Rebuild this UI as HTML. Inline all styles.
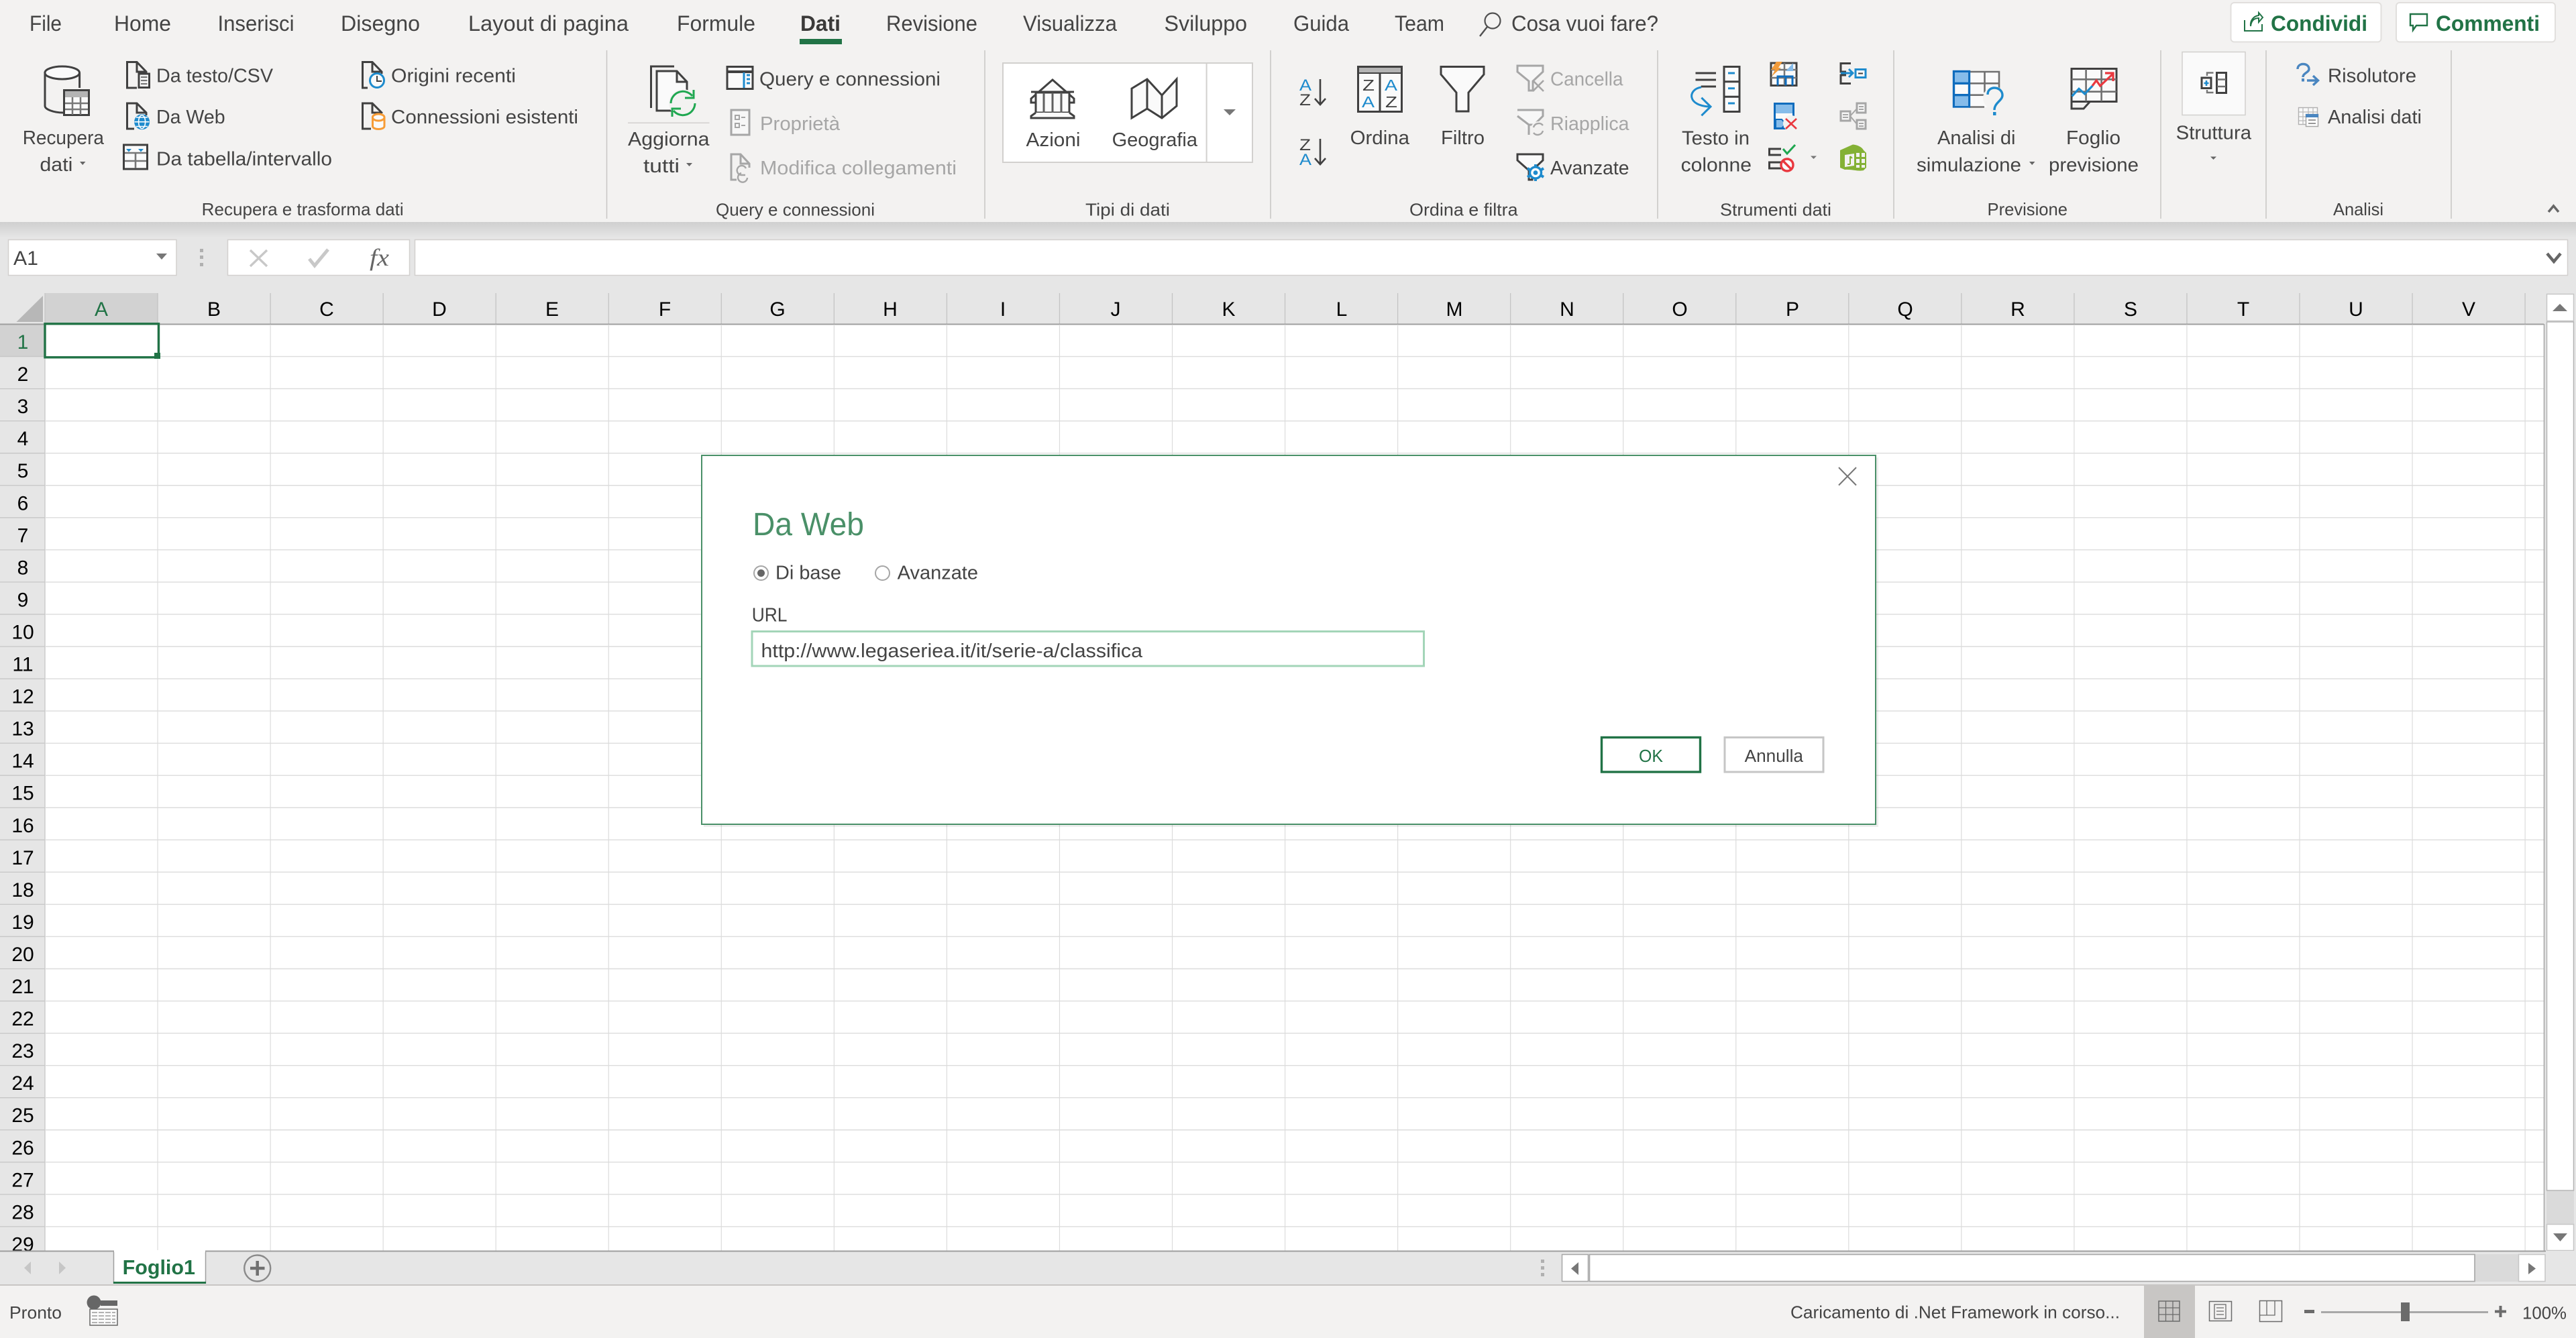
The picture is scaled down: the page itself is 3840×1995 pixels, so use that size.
<!DOCTYPE html>
<html lang="it"><head><meta charset="utf-8"><title>Excel - Da Web</title>
<style>
html,body{margin:0;padding:0;background:#fff;width:3840px;height:1995px;overflow:hidden}
svg{display:block}
text{font-family:"Liberation Sans",sans-serif;fill:#444}
.tab{font-size:32px}
.it{font-size:29px}
.gl{font-size:26px}
.dis{fill:#a6a6a6}
.hd{font-size:30px;fill:#000;text-anchor:middle}
.ic{fill:none;stroke:#404040;stroke-width:3}
.fw{fill:#fafafa;stroke:#404040;stroke-width:3}
.gr{fill:none;stroke:#a6a6a6;stroke-width:3}
.gf{fill:#f7f7f7;stroke:#a6a6a6;stroke-width:3}
.bl{fill:none;stroke:#1e8bcd;stroke-width:3}
</style></head><body>
<svg xmlns="http://www.w3.org/2000/svg" width="3840" height="1995" viewBox="0 0 3840 1995">
<defs><linearGradient id="sh" x1="0" y1="0" x2="0" y2="1"><stop offset="0" stop-color="#cfcfcf"/><stop offset="1" stop-color="#e6e6e6"/></linearGradient></defs>
<rect width="3840" height="1995" fill="#fff"/>
<!-- ribbon -->
<rect width="3840" height="331" fill="#f3f2f1"/>
<rect y="331" width="3840" height="106" fill="#e6e6e6"/>
<rect y="331" width="3840" height="24" fill="url(#sh)"/>
<!-- tabs -->
<text class="tab" x="44" y="46" textLength="48" lengthAdjust="spacingAndGlyphs">File</text>
<text class="tab" x="170" y="46" textLength="85" lengthAdjust="spacingAndGlyphs">Home</text>
<text class="tab" x="324.5" y="46" textLength="114" lengthAdjust="spacingAndGlyphs">Inserisci</text>
<text class="tab" x="508" y="46" textLength="118" lengthAdjust="spacingAndGlyphs">Disegno</text>
<text class="tab" x="698" y="46" textLength="239" lengthAdjust="spacingAndGlyphs">Layout di pagina</text>
<text class="tab" x="1009" y="46" textLength="117" lengthAdjust="spacingAndGlyphs">Formule</text>
<text class="tab" x="1193" y="46" textLength="60" lengthAdjust="spacingAndGlyphs" font-weight="bold" style="fill:#3b3a39">Dati</text>
<rect x="1192" y="58" width="63" height="8" fill="#217346"/>
<text class="tab" x="1321" y="46" textLength="136" lengthAdjust="spacingAndGlyphs">Revisione</text>
<text class="tab" x="1525" y="46" textLength="140" lengthAdjust="spacingAndGlyphs">Visualizza</text>
<text class="tab" x="1735.5" y="46" textLength="123.5" lengthAdjust="spacingAndGlyphs">Sviluppo</text>
<text class="tab" x="1928" y="46" textLength="83" lengthAdjust="spacingAndGlyphs">Guida</text>
<text class="tab" x="2079" y="46" textLength="74" lengthAdjust="spacingAndGlyphs">Team</text>
<circle cx="2225" cy="31" r="11.5" fill="none" stroke="#505050" stroke-width="2.2"/><path d="M2217 40L2206 54" fill="none" stroke="#505050" stroke-width="2.4"/>
<text class="tab" x="2253" y="46" textLength="219" lengthAdjust="spacingAndGlyphs">Cosa vuoi fare?</text>
<!-- share buttons -->
<rect x="3325.5" y="4" width="224" height="58.5" rx="5" fill="#fff" stroke="#e1dfdd" stroke-width="2"/>
<rect x="3572" y="4" width="237" height="58.5" rx="5" fill="#fff" stroke="#e1dfdd" stroke-width="2"/>
<path d="M3346 30V46H3372V36M3355 39C3356 30 3361 27 3367 27V33L3373 26L3367 19V23C3359 24 3354 31 3355 39Z" fill="none" stroke="#217346" stroke-width="2"/>
<path d="M3593 21H3618V38H3602L3597 45V38H3593Z" fill="none" stroke="#217346" stroke-width="2.4"/>
<text x="3385" y="46" font-size="32" font-weight="bold" textLength="144" lengthAdjust="spacingAndGlyphs" style="fill:#217346">Condividi</text>
<text x="3631" y="46" font-size="32" font-weight="bold" textLength="155" lengthAdjust="spacingAndGlyphs" style="fill:#217346">Commenti</text>
<!-- separators -->
<path d="M904.5 75V326M1468 75V326M1894 75V326M2471 75V326M2823 75V326M3221 75V326M3378 75V326M3654 75V326" stroke="#c8c6c4" stroke-width="1.5" fill="none"/>
<!-- group labels -->
<text class="gl" x="300.7" y="321" textLength="301" lengthAdjust="spacingAndGlyphs">Recupera e trasforma dati</text>
<text class="gl" x="1067" y="321.5" textLength="237" lengthAdjust="spacingAndGlyphs">Query e connessioni</text>
<text class="gl" x="1618" y="321.5" textLength="126" lengthAdjust="spacingAndGlyphs">Tipi di dati</text>
<text class="gl" x="2101" y="321.5" textLength="161.6" lengthAdjust="spacingAndGlyphs">Ordina e filtra</text>
<text class="gl" x="2564" y="321.5" textLength="166" lengthAdjust="spacingAndGlyphs">Strumenti dati</text>
<text class="gl" x="2962.5" y="321" textLength="119.5" lengthAdjust="spacingAndGlyphs">Previsione</text>
<text class="gl" x="3478" y="321" textLength="75" lengthAdjust="spacingAndGlyphs">Analisi</text>
<path d="M3799 316L3806.5 307L3814 316" fill="none" stroke="#666" stroke-width="3.5"/>
<!-- item labels -->
<text class="it" x="33.7" y="215" textLength="121.3" lengthAdjust="spacingAndGlyphs">Recupera</text>
<text class="it" x="59.4" y="255" textLength="49" lengthAdjust="spacingAndGlyphs">dati</text>
<path d="M119 241H127.5L123.2 246Z" fill="#666"/>
<text class="it" x="233" y="122.6" textLength="174" lengthAdjust="spacingAndGlyphs">Da testo/CSV</text>
<text class="it" x="233" y="184" textLength="102.6" lengthAdjust="spacingAndGlyphs">Da Web</text>
<text class="it" x="233" y="246.5" textLength="262" lengthAdjust="spacingAndGlyphs">Da tabella/intervallo</text>
<text class="it" x="583" y="122.6" textLength="186" lengthAdjust="spacingAndGlyphs">Origini recenti</text>
<text class="it" x="583" y="184" textLength="279" lengthAdjust="spacingAndGlyphs">Connessioni esistenti</text>
<text class="it" x="936" y="217" textLength="121.5" lengthAdjust="spacingAndGlyphs">Aggiorna</text>
<text class="it" x="959" y="257" textLength="54" lengthAdjust="spacingAndGlyphs">tutti</text>
<path d="M1023 243H1032L1027.5 248Z" fill="#666"/>
<rect x="936" y="182.5" width="121.5" height="1.5" fill="#d2d0ce"/>
<text class="it" x="1132" y="127.7" textLength="270" lengthAdjust="spacingAndGlyphs">Query e connessioni</text>
<text class="it dis" x="1133" y="194" textLength="119" lengthAdjust="spacingAndGlyphs">Proprietà</text>
<text class="it dis" x="1133" y="260" textLength="293" lengthAdjust="spacingAndGlyphs">Modifica collegamenti</text>
<rect x="1495" y="94" width="372" height="148" fill="#fff" stroke="#d2d0ce" stroke-width="2"/>
<path d="M1798.6 94V242" stroke="#d2d0ce" stroke-width="2"/>
<path d="M1824 163H1842L1833 172Z" fill="#777"/>
<text class="it" x="1529.5" y="218" textLength="81" lengthAdjust="spacingAndGlyphs">Azioni</text>
<text class="it" x="1657.6" y="218" textLength="127.4" lengthAdjust="spacingAndGlyphs">Geografia</text>
<text class="it" x="2012.6" y="215" textLength="88.4" lengthAdjust="spacingAndGlyphs">Ordina</text>
<text class="it" x="2148" y="215" textLength="65" lengthAdjust="spacingAndGlyphs">Filtro</text>
<text class="it dis" x="2311" y="127.7" textLength="108.5" lengthAdjust="spacingAndGlyphs">Cancella</text>
<text class="it dis" x="2311" y="194" textLength="117.5" lengthAdjust="spacingAndGlyphs">Riapplica</text>
<text class="it" x="2311" y="260" textLength="117.5" lengthAdjust="spacingAndGlyphs">Avanzate</text>
<text class="it" x="2507" y="215.5" textLength="101" lengthAdjust="spacingAndGlyphs">Testo in</text>
<text class="it" x="2505.6" y="255.5" textLength="105.4" lengthAdjust="spacingAndGlyphs">colonne</text>
<text class="it" x="2888" y="215" textLength="116.5" lengthAdjust="spacingAndGlyphs">Analisi di</text>
<text class="it" x="2857" y="255.5" textLength="156" lengthAdjust="spacingAndGlyphs">simulazione</text>
<path d="M3025 241H3033.5L3029.2 246Z" fill="#666"/>
<text class="it" x="3080" y="215" textLength="81" lengthAdjust="spacingAndGlyphs">Foglio</text>
<text class="it" x="3054" y="255.5" textLength="134" lengthAdjust="spacingAndGlyphs">previsione</text>
<rect x="3253" y="77.5" width="94" height="94" fill="#fafafa" stroke="#d2d0ce" stroke-width="1.5"/>
<text class="it" x="3243.7" y="207.6" textLength="112.3" lengthAdjust="spacingAndGlyphs">Struttura</text>
<path d="M3295 233.5H3304L3299.5 238Z" fill="#666"/>
<text class="it" x="3470" y="122.6" textLength="132" lengthAdjust="spacingAndGlyphs">Risolutore</text>
<text class="it" x="3470" y="184" textLength="140" lengthAdjust="spacingAndGlyphs">Analisi dati</text>
<!-- Recupera dati icon -->
<path d="M118.6 108.5V131M67 108.5V158C67 163 80 168 94 168" class="ic"/>
<ellipse cx="92.7" cy="108.5" rx="25.8" ry="9.5" class="fw"/>
<rect x="95.5" y="134.5" width="37" height="37" fill="#fafafa" stroke="#404040" stroke-width="3"/>
<rect x="97" y="136" width="34" height="9" fill="#b4b4b4"/>
<path d="M108 145V171M120 145V171M97 154H131M97 163H131" stroke="#777" stroke-width="2.5" fill="none"/>
<!-- doc icons -->
<path d="M204 131H189.5V92.5H204L218 107V110M204 92.5V107H218" class="ic"/>
<rect x="207" y="110" width="15.5" height="20.5" class="fw"/><path d="M210 115H219.5M210 120H219.5M210 125H219.5" stroke="#777" stroke-width="2.2"/>
<path d="M200 192H189.5V154H204L218 168V172M204 154V168H218" class="ic"/>
<circle cx="211.6" cy="181.7" r="11.5" fill="#1e8bcd"/><path d="M200.5 181.7H222.5M203 175H220M203 188.5H220" stroke="#fff" stroke-width="1.6"/><ellipse cx="211.6" cy="181.7" rx="5" ry="10" fill="none" stroke="#fff" stroke-width="1.6"/>
<rect x="184.5" y="216" width="35" height="36" fill="#fafafa" stroke="#404040" stroke-width="3"/>
<path d="M186 228H218M186 240H218M202 228V251" stroke="#777" stroke-width="2.6" fill="none"/>
<path d="M188 222H196L192 226.5ZM206 222H214L210 226.5Z" fill="#1e8bcd"/>
<path d="M548 131H540.5V92.5H555L569 107V110M555 92.5V107H569" class="ic"/>
<circle cx="562" cy="120" r="10.5" fill="#fafafa" stroke="#1e8bcd" stroke-width="3"/><path d="M562 113V121H569" stroke="#404040" stroke-width="2" fill="none"/>
<path d="M553 192H540.5V154H555L569 168V169" class="ic"/><path d="M555 154V168H569" class="ic"/>
<path d="M555.5 175V188C555.5 194 573 194 573 188V175" fill="#fafafa" stroke="#f79c36" stroke-width="3"/><ellipse cx="564.2" cy="175" rx="8.8" ry="5" fill="#fafafa" stroke="#f79c36" stroke-width="3"/>
<!-- Aggiorna -->
<path d="M1005 99H970.5V161" class="ic"/>
<path d="M1030 141V165H979V106H1009L1024 122V135M1009 106V122H1024" fill="#fafafa" stroke="#404040" stroke-width="3"/>
<circle cx="1018" cy="154" r="21" fill="#f3f2f1"/>
<path d="M1000 154A18 18 0 0 1 1032 143M1036 154A18 18 0 0 1 1004 165" fill="none" stroke="#1fa750" stroke-width="3"/>
<path d="M1021 146H1034V134M1015 162H1002V174" fill="none" stroke="#1fa750" stroke-width="3"/>
<!-- Query icon -->
<rect x="1084" y="99.5" width="38" height="33" fill="#fafafa" stroke="#404040" stroke-width="3"/><path d="M1085 107H1121" stroke="#404040" stroke-width="4"/><path d="M1109 108V131" stroke="#1e8bcd" stroke-width="3"/><path d="M1113 112H1118M1113 118H1118M1113 124H1118" stroke="#1e8bcd" stroke-width="3"/>
<rect x="1090" y="164" width="27" height="37" class="gf"/><path d="M1096 172H1102V178H1096ZM1096 184H1102V190H1096Z" fill="none" stroke="#a6a6a6" stroke-width="2"/><path d="M1105 175H1111M1105 187H1111" stroke="#a6a6a6" stroke-width="2"/>
<path d="M1098 268H1090V230H1104L1117 244V250M1104 230V244H1117" class="gr"/>
<path d="M1112 251A7 7 0 1 0 1105 261H1111M1105 258A7 7 0 1 0 1114 265" fill="none" stroke="#a6a6a6" stroke-width="2.4"/>
<!-- Azioni -->
<path d="M1569 119L1537 147V153H1601V147Z" fill="#fafafa" stroke="#404040" stroke-width="3"/>
<rect x="1544" y="138" width="50" height="30" fill="#fafafa" stroke="#404040" stroke-width="3"/>
<path d="M1556 138V168M1569 138V168M1582 138V168" stroke="#606060" stroke-width="3"/>
<path d="M1537 137H1601" stroke="#404040" stroke-width="3"/>
<path d="M1544 168L1537 173V176H1601V173L1594 168" fill="#fafafa" stroke="#404040" stroke-width="3"/>
<!-- Geografia -->
<path d="M1687 132L1710 118L1732 142L1754 118V158L1732 176L1710 162L1687 176Z" fill="#fafafa" stroke="#404040" stroke-width="3"/><path d="M1710 118V162M1732 142V176" stroke="#404040" stroke-width="3"/>
<!-- Sort -->
<text x="1937" y="135" font-size="24" textLength="18" lengthAdjust="spacingAndGlyphs" style="fill:#1e8bcd">A</text>
<text x="1937" y="157" font-size="24" textLength="17" lengthAdjust="spacingAndGlyphs" style="fill:#404040">Z</text>
<path d="M1968 118V156M1960 147L1968 156L1976 147" fill="none" stroke="#404040" stroke-width="2.6"/>
<text x="1937" y="224" font-size="24" textLength="17" lengthAdjust="spacingAndGlyphs" style="fill:#404040">Z</text>
<text x="1937" y="246" font-size="24" textLength="18" lengthAdjust="spacingAndGlyphs" style="fill:#1e8bcd">A</text>
<path d="M1968 207V245M1960 236L1968 245L1976 236" fill="none" stroke="#404040" stroke-width="2.6"/>
<!-- Ordina -->
<rect x="2024.5" y="99.5" width="65" height="67" fill="#fafafa" stroke="#404040" stroke-width="3"/>
<rect x="2026" y="101" width="62" height="9" fill="#b4b4b4"/><path d="M2026 109H2088" stroke="#404040" stroke-width="2"/><path d="M2057 110V165" stroke="#404040" stroke-width="3"/>
<text x="2031" y="135" font-size="23" textLength="18" lengthAdjust="spacingAndGlyphs" style="fill:#404040">Z</text>
<text x="2064" y="135" font-size="23" textLength="19" lengthAdjust="spacingAndGlyphs" style="fill:#1e8bcd">A</text>
<text x="2030" y="160" font-size="23" textLength="19" lengthAdjust="spacingAndGlyphs" style="fill:#1e8bcd">A</text>
<text x="2065" y="160" font-size="23" textLength="18" lengthAdjust="spacingAndGlyphs" style="fill:#404040">Z</text>
<!-- Filtro -->
<path d="M2148 99.5H2212V111L2189 138V166H2171V138L2148 111Z" fill="#fafafa" stroke="#404040" stroke-width="3"/>
<!-- Cancella -->
<path d="M2262 98H2300V107L2285 121V135H2279V121L2262 107Z" class="gf"/>
<path d="M2285 120L2301 136M2301 120L2285 136" stroke="#a6a6a6" stroke-width="2.6" fill="none"/>
<path d="M2262 164H2300V173L2287 186H2279V201M2279 186L2262 173Z" class="gf"/>
<circle cx="2293" cy="192" r="11" fill="#f3f2f1"/>
<path d="M2286 190A8 8 0 0 1 2300 187M2300 195A8 8 0 0 1 2286 198" fill="none" stroke="#a6a6a6" stroke-width="2.4"/>
<path d="M2262 230H2300V239L2284 254V268H2279V254L2262 239Z" fill="#fafafa" stroke="#404040" stroke-width="3"/>
<circle cx="2289" cy="257.5" r="8.5" fill="#fff" stroke="#1e8bcd" stroke-width="3.4"/><circle cx="2289" cy="257.5" r="3.4" fill="#1e8bcd"/>
<path d="M2289 245V249M2289 266V270M2277 251L2281 253.5M2297 261.5L2301 264M2301 251L2297 253.5M2281 261.5L2277 264" stroke="#1e8bcd" stroke-width="4"/>
<!-- Testo in colonne -->
<path d="M2527.5 109H2558M2527.5 119H2558M2535.7 129H2558" stroke="#404040" stroke-width="3" fill="none"/>
<rect x="2570" y="99.5" width="23" height="67" fill="#fafafa" stroke="#404040" stroke-width="3"/><path d="M2570 121.7H2593M2570 144.3H2593" stroke="#404040" stroke-width="3"/>
<path d="M2576 109H2586M2576 131.7H2586M2576 154H2586" stroke="#1e8bcd" stroke-width="3"/>
<path d="M2536 130C2516 133 2514 158 2549 159M2536.4 145.7L2550 159L2536.4 172.3" class="bl"/>
<!-- Flash fill -->
<rect x="2640" y="94" width="38" height="33.5" fill="#fafafa" stroke="#404040" stroke-width="3"/>
<path d="M2660 94V127M2640 104H2678M2640 116H2678" stroke="#777" stroke-width="2.5"/>
<path d="M2662 106L2673 94V106Z" fill="#86bcea"/>
<path d="M2650 127.5V114H2672V127.5M2662 114V127.5" fill="none" stroke="#0f6cbd" stroke-width="3"/>
<path d="M2648 92H2657L2651 101H2655L2641 114L2646 104H2640Z" fill="#f29b3a"/>
<!-- Remove dup -->
<rect x="2645.5" y="154.5" width="28" height="37" fill="#fafafa" stroke="#0f6cbd" stroke-width="3"/>
<rect x="2647" y="156" width="25" height="13" fill="#86bcea"/>
<path d="M2647 178H2656L2662 185L2656 191H2647Z" fill="#86bcea" stroke="#0f6cbd" stroke-width="2"/>
<circle cx="2670" cy="184" r="12" fill="#f3f2f1"/>
<path d="M2662 177L2678 192M2678 177L2662 192" stroke="#e9383f" stroke-width="2.6"/>
<!-- Validate -->
<path d="M2655 222H2637.5V231H2655M2655 242H2637.5V251H2655" class="ic"/>
<path d="M2658 222L2664 229L2676 216" fill="none" stroke="#1fa750" stroke-width="3"/>
<circle cx="2664" cy="246" r="9" fill="#fafafa" stroke="#e9383f" stroke-width="3.4"/><path d="M2658 240L2670 252" stroke="#e9383f" stroke-width="3.4"/>
<path d="M2699 232.5H2708L2703.5 237Z" fill="#777"/>
<!-- Consolidate -->
<path d="M2759 94.5H2744V107H2752M2752 112H2744V124.5H2759" class="ic"/>
<path d="M2744 109H2762M2756 103L2762 109L2756 115" class="bl"/>
<rect x="2766" y="103.5" width="15" height="12" fill="#fafafa" stroke="#1e8bcd" stroke-width="3"/><path d="M2770 109.5H2777" stroke="#404040" stroke-width="2"/>
<!-- Relationships -->
<rect x="2744" y="166" width="14" height="14" class="gf"/><rect x="2768" y="154" width="13" height="14" class="gf"/><rect x="2768" y="179" width="13" height="13" class="gf"/>
<path d="M2747 171H2755M2747 175H2755M2771 159H2778M2771 163H2778M2771 184H2778M2771 188H2778M2758 173L2768 162M2758 173L2768 185" stroke="#a6a6a6" stroke-width="2" fill="none"/>
<!-- Data model -->
<path d="M2743 224L2762 215.5C2770 216 2776 220 2778 224L2782 228V250L2778 254C2770 256 2760 252 2750 253L2743 250Z" fill="#84b135"/>
<path d="M2750 231V249L2764 247V229Z" fill="#f3f2f1"/>
<path d="M2767 228H2772V234H2767ZM2775 228H2780V234H2775ZM2767 237H2772V243H2767ZM2775 237H2780V243H2775ZM2767 246H2772V250H2767ZM2775 246H2780V250H2775Z" fill="#f3f2f1"/>
<path d="M2758 233V245M2754 245H2758M2758 233L2761 236" stroke="#84b135" stroke-width="2" fill="none"/>
<!-- Analisi simulazione -->
<rect x="2912" y="106.5" width="68" height="53" fill="#fafafa"/>
<path d="M2935.5 107H2980V133M2958.5 107V138M2935.5 124.3H2980M2935.5 141.7H2958M2958 159.5H2935.5M2935.5 107V159.5" fill="none" stroke="#707070" stroke-width="2.6"/>
<rect x="2912.5" y="106.5" width="23" height="52.5" fill="#fafafa" stroke="#0f6cbd" stroke-width="3.4"/>
<rect x="2914" y="108" width="20" height="15" fill="#86bcea"/><rect x="2914" y="143" width="20" height="15" fill="#86bcea"/>
<path d="M2912 124.3H2936M2912 141.7H2936" stroke="#0f6cbd" stroke-width="3.4"/>
<circle cx="2973" cy="146" r="17" fill="#f3f2f1" opacity=".9"/>
<path d="M2963 141C2963 134 2968 131 2973 131C2980 131 2985 136 2985 142C2985 150 2973 153 2973 164" fill="none" stroke="#1e8bcd" stroke-width="3.4"/>
<rect x="2971" y="167" width="4.5" height="5" fill="#1e8bcd"/>
<!-- Foglio previsione -->
<rect x="3088" y="102.5" width="67" height="49" fill="#fafafa" stroke="#404040" stroke-width="3"/>
<path d="M3109.6 103V151M3132.6 103V151M3088 118.3H3155M3088 136.7H3155" stroke="#707070" stroke-width="2.6"/>
<path d="M3088 152V162H3106L3115 152" fill="none" stroke="#404040" stroke-width="3"/>
<path d="M3088.6 143.5L3099 132.3L3107.7 140L3119.2 128" fill="none" stroke="#1e8bcd" stroke-width="3.2"/>
<path d="M3119 128L3125 120L3130.7 128L3149.8 110M3138 109H3150V121" fill="none" stroke="#e9383f" stroke-width="3.2"/>
<!-- Struttura icon -->
<rect x="3282" y="116" width="14" height="15.5" fill="#fafafa" stroke="#404040" stroke-width="3"/>
<path d="M3285.5 124H3292.5M3289 120V128" stroke="#1e8bcd" stroke-width="2.6"/>
<path d="M3299.5 108.5H3290V113M3290 134V138H3299.5" fill="none" stroke="#777" stroke-width="2.4"/>
<rect x="3304.5" y="108.5" width="14" height="30" fill="#fafafa" stroke="#404040" stroke-width="3"/><path d="M3305 118.5H3318M3305 129H3318" stroke="#707070" stroke-width="2.4"/>
<!-- Risolutore -->
<path d="M3425 103C3425 98 3429 95.5 3433 95.5C3439 95.5 3442 99 3442 103C3442 108 3433 109 3433 115" fill="none" stroke="#4a86c0" stroke-width="3.4"/><rect x="3431" y="117" width="4" height="4.5" fill="#4a86c0"/>
<path d="M3439 120H3455M3448 113L3455.5 120L3448 127" fill="none" stroke="#4a86c0" stroke-width="3.4"/>
<!-- Analisi dati -->
<rect x="3426.5" y="160.5" width="28" height="25" fill="#fafafa" stroke="#b0b0b0" stroke-width="1.4"/>
<path d="M3433 161V185M3441 161V170M3448 161V170M3427 167H3454M3427 174H3437M3427 180H3437" stroke="#b8b8b8" stroke-width="1.2"/>
<rect x="3437.5" y="170.5" width="18" height="18" fill="#fff" stroke="#a6a6a6" stroke-width="1.5"/><rect x="3437" y="170" width="19" height="5" fill="#4a86c0"/><path d="M3441 179H3452M3441 184H3452" stroke="#777" stroke-width="1.4"/>
<!-- Formula bar -->
<rect x="12.5" y="357.5" width="250.5" height="53" fill="#fff" stroke="#d2d0ce" stroke-width="1.5"/>
<text x="20" y="395" font-size="30" textLength="37" lengthAdjust="spacingAndGlyphs">A1</text>
<path d="M233 378H249L241 387Z" fill="#777"/>
<rect x="298" y="371" width="5" height="5" fill="#b0b0b0"/><rect x="298" y="381" width="5" height="5" fill="#b0b0b0"/><rect x="298" y="392" width="5" height="5" fill="#b0b0b0"/>
<rect x="339.5" y="357.5" width="271" height="53" fill="#fff" stroke="#d2d0ce" stroke-width="1.5"/>
<path d="M373 373L398 397M398 373L373 397" stroke="#c8c8c8" stroke-width="3.4" fill="none"/>
<path d="M461 386L469 396L489 372" stroke="#c8c8c8" stroke-width="5" fill="none"/>
<text x="551" y="396" font-size="36" textLength="29" lengthAdjust="spacingAndGlyphs" style="font-family:'Liberation Serif',serif;font-style:italic;fill:#666">fx</text>
<rect x="618.5" y="357.5" width="3209" height="53" fill="#fff" stroke="#d2d0ce" stroke-width="1.5"/>
<path d="M3797 378L3807 390L3817 378" fill="none" stroke="#666" stroke-width="4.5"/>
<!-- Column headers -->
<rect y="437" width="3792" height="46" fill="#e6e6e6"/>
<rect y="483" width="67" height="1382" fill="#e6e6e6"/>
<rect x="67" y="437" width="168" height="46" fill="#d2d2d2"/>
<rect y="484" width="67" height="47.5" fill="#d2d2d2"/>
<path d="M64 441V480H24.5Z" fill="#b7b7b7"/>
<path d="M235 437V483M403.1 437V483M571.15 437V483M739.2 437V483M907.25 437V483M1075.3 437V483M1243.35 437V483M1411.4 437V483M1579.45 437V483M1747.5 437V483M1915.55 437V483M2083.6 437V483M2251.65 437V483M2419.7 437V483M2587.75 437V483M2755.8 437V483M2923.85 437V483M3091.9 437V483M3259.95 437V483M3428 437V483M3596.05 437V483M3764.1 437V483" stroke="#c4c4c4" stroke-width="1.3" fill="none"/>
<path d="M0 483.5H3792" stroke="#9f9f9f" stroke-width="2" fill="none"/>
<path d="M67 437V1865" stroke="#c6c6c6" stroke-width="1.3" fill="none"/>
<!-- Grid -->
<path d="M235 484V1865M403.1 484V1865M571.15 484V1865M739.2 484V1865M907.25 484V1865M1075.3 484V1865M1243.35 484V1865M1411.4 484V1865M1579.45 484V1865M1747.5 484V1865M1915.55 484V1865M2083.6 484V1865M2251.65 484V1865M2419.7 484V1865M2587.75 484V1865M2755.8 484V1865M2923.85 484V1865M3091.9 484V1865M3259.95 484V1865M3428 484V1865M3596.05 484V1865M3764.1 484V1865" stroke="#dcdcdc" stroke-width="1.2" fill="none"/>
<path d="M67 531.55H3792M67 579.6H3792M67 627.65H3792M67 675.7H3792M67 723.75H3792M67 771.8H3792M67 819.85H3792M67 867.9H3792M67 915.95H3792M67 964H3792M67 1012.05H3792M67 1060.1H3792M67 1108.15H3792M67 1156.2H3792M67 1204.25H3792M67 1252.3H3792M67 1300.35H3792M67 1348.4H3792M67 1396.45H3792M67 1444.5H3792M67 1492.55H3792M67 1540.6H3792M67 1588.65H3792M67 1636.7H3792M67 1684.75H3792M67 1732.8H3792M67 1780.85H3792M67 1828.9H3792" stroke="#dcdcdc" stroke-width="1.4" fill="none"/>
<path d="M0 531.55H67M0 579.6H67M0 627.65H67M0 675.7H67M0 723.75H67M0 771.8H67M0 819.85H67M0 867.9H67M0 915.95H67M0 964H67M0 1012.05H67M0 1060.1H67M0 1108.15H67M0 1156.2H67M0 1204.25H67M0 1252.3H67M0 1300.35H67M0 1348.4H67M0 1396.45H67M0 1444.5H67M0 1492.55H67M0 1540.6H67M0 1588.65H67M0 1636.7H67M0 1684.75H67M0 1732.8H67M0 1780.85H67M0 1828.9H67" stroke="#c6c6c6" stroke-width="1.3" fill="none"/>
<!-- Column letters -->
<text class="hd" x="151" y="471" style="fill:#217346">A</text>
<text class="hd" x="319" y="471">B</text><text class="hd" x="487" y="471">C</text><text class="hd" x="655" y="471">D</text><text class="hd" x="823" y="471">E</text><text class="hd" x="991" y="471">F</text><text class="hd" x="1159" y="471">G</text><text class="hd" x="1327" y="471">H</text><text class="hd" x="1495" y="471">I</text><text class="hd" x="1663" y="471">J</text><text class="hd" x="1831.5" y="471">K</text><text class="hd" x="2000" y="471">L</text><text class="hd" x="2168" y="471">M</text><text class="hd" x="2336" y="471">N</text><text class="hd" x="2504" y="471">O</text><text class="hd" x="2672" y="471">P</text><text class="hd" x="2840" y="471">Q</text><text class="hd" x="3008" y="471">R</text><text class="hd" x="3176" y="471">S</text><text class="hd" x="3344" y="471">T</text><text class="hd" x="3512" y="471">U</text><text class="hd" x="3680" y="471">V</text>
<!-- Row numbers -->
<text class="hd" x="34" y="520" style="fill:#217346">1</text>
<text class="hd" x="34" y="568">2</text><text class="hd" x="34" y="616.1">3</text><text class="hd" x="34" y="664.2">4</text><text class="hd" x="34" y="712.2">5</text><text class="hd" x="34" y="760.3">6</text><text class="hd" x="34" y="808.3">7</text><text class="hd" x="34" y="856.4">8</text><text class="hd" x="34" y="904.4">9</text><text class="hd" x="34" y="952.5">10</text><text class="hd" x="34" y="1000.5">11</text><text class="hd" x="34" y="1048.6">12</text><text class="hd" x="34" y="1096.6">13</text><text class="hd" x="34" y="1144.7">14</text><text class="hd" x="34" y="1192.7">15</text><text class="hd" x="34" y="1240.8">16</text><text class="hd" x="34" y="1288.8">17</text><text class="hd" x="34" y="1336.9">18</text><text class="hd" x="34" y="1384.9">19</text><text class="hd" x="34" y="1433">20</text><text class="hd" x="34" y="1481">21</text><text class="hd" x="34" y="1529.1">22</text><text class="hd" x="34" y="1577.1">23</text><text class="hd" x="34" y="1625.2">24</text><text class="hd" x="34" y="1673.2">25</text><text class="hd" x="34" y="1721.3">26</text><text class="hd" x="34" y="1769.3">27</text><text class="hd" x="34" y="1817.4">28</text><text class="hd" x="34" y="1865.4">29</text>
<!-- Selection -->
<rect x="67" y="482.8" width="169.5" height="50" fill="none" stroke="#217346" stroke-width="3.4"/>
<rect x="230" y="526" width="9" height="9" fill="#217346"/>
<!-- Vertical scrollbar -->
<rect x="3792" y="437" width="48" height="1428" fill="#e6e6e6"/>
<path d="M3792.5 483V1866" stroke="#a8a8a8" stroke-width="1.6"/>
<rect x="3796.5" y="480" width="40" height="1295" fill="#fff" stroke="#b4b4b4" stroke-width="1.5"/>
<rect x="3796" y="1776" width="41" height="49" fill="#dadada"/>
<rect x="3796.5" y="438.5" width="40" height="40" fill="#fff" stroke="#c6c6c6" stroke-width="1.5"/>
<path d="M3805 464H3827L3816 453Z" fill="#777"/>
<rect x="3796.5" y="1825.5" width="40" height="39" fill="#fff" stroke="#c6c6c6" stroke-width="1.5"/>
<path d="M3806 1839H3827L3816.5 1851Z" fill="#777"/>
<!-- Sheet tabs -->
<rect y="1865" width="3840" height="51" fill="#e6e6e6"/>
<path d="M0 1865.5H3795" stroke="#9f9f9f" stroke-width="2"/>
<path d="M0 1916H3840" stroke="#c8c6c4" stroke-width="2"/>
<path d="M46 1881L36 1890.5L46 1900ZM88 1881L98 1890.5L88 1900Z" fill="#c6c6c6"/>
<path d="M169.5 1866V1913H306.5V1866" fill="#fff" stroke="#9f9f9f" stroke-width="1.5"/>
<rect x="170" y="1864" width="136" height="3" fill="#fff"/>
<rect x="169" y="1911" width="138" height="3" fill="#217346"/>
<text x="182.6" y="1900" font-size="31" font-weight="bold" textLength="108.4" lengthAdjust="spacingAndGlyphs" style="fill:#217346">Foglio1</text>
<circle cx="383.7" cy="1891" r="19.5" fill="none" stroke="#8a8a8a" stroke-width="2.4"/>
<path d="M373 1891H394.5M383.7 1880V1902" stroke="#707070" stroke-width="4.5"/>
<!-- Horizontal scrollbar -->
<rect x="2297" y="1878" width="5" height="5" fill="#b0b0b0"/><rect x="2297" y="1888" width="5" height="5" fill="#b0b0b0"/><rect x="2297" y="1898" width="5" height="5" fill="#b0b0b0"/>
<rect x="2328.5" y="1870.5" width="39" height="40" fill="#fff" stroke="#a6a6a6" stroke-width="1.5"/>
<path d="M2353 1882L2342 1891.5L2353 1901Z" fill="#777"/>
<rect x="3689" y="1870" width="66" height="41" fill="#dadada"/>
<rect x="2369.5" y="1870.5" width="1319.5" height="40" fill="#fff" stroke="#a6a6a6" stroke-width="1.6"/>
<rect x="3754.5" y="1870.5" width="39.5" height="40" fill="#fff" stroke="#c6c6c6" stroke-width="1.5"/>
<path d="M3769 1883L3780 1891.5L3769 1900Z" fill="#777"/>
<!-- Status bar -->
<rect y="1917" width="3840" height="78" fill="#f3f2f1"/>
<text x="14" y="1966" font-size="26" textLength="78" lengthAdjust="spacingAndGlyphs">Pronto</text>
<rect x="150" y="1939" width="25" height="8" fill="#666"/>
<circle cx="140" cy="1942" r="10.5" fill="#666"/>
<rect x="134" y="1952" width="41" height="24" fill="#fafafa" stroke="#666" stroke-width="1.5"/>
<path d="M137 1957H172M137 1962H172M137 1967H172M137 1972H172" stroke="#888" stroke-width="1.3" stroke-dasharray="8 2"/>
<text x="2669" y="1965.7" font-size="26" textLength="491" lengthAdjust="spacingAndGlyphs">Caricamento di .Net Framework in corso...</text>
<rect x="3196" y="1917" width="76" height="78" fill="#c8c6c4"/>
<rect x="3218" y="1940" width="31" height="30" fill="none" stroke="#6b6b6b" stroke-width="1.5"/>
<path d="M3228.5 1940V1970M3239 1940V1970M3218 1950H3249M3218 1960H3249" stroke="#6b6b6b" stroke-width="1.3"/>
<rect x="3293.5" y="1940.5" width="33" height="29" fill="none" stroke="#6b6b6b" stroke-width="1.5"/>
<rect x="3301" y="1945" width="17" height="21" fill="none" stroke="#6b6b6b" stroke-width="1.3"/>
<path d="M3304 1950H3315M3304 1955H3315M3304 1960H3315" stroke="#6b6b6b" stroke-width="1.3"/>
<rect x="3368.5" y="1939.5" width="33" height="31" fill="none" stroke="#6b6b6b" stroke-width="1.5"/>
<path d="M3379 1940V1961H3369M3391 1940V1961H3379" fill="none" stroke="#6b6b6b" stroke-width="1.3"/>
<rect x="3435" y="1953" width="15" height="5" fill="#6b6b6b"/>
<rect x="3460" y="1955" width="249" height="3" fill="#a8a8a8"/>
<rect x="3579" y="1942" width="13" height="28" fill="#6b6b6b"/>
<path d="M3719 1955.5H3736M3727.5 1947V1964" stroke="#6b6b6b" stroke-width="4"/>
<text x="3760" y="1966.7" font-size="26" textLength="66" lengthAdjust="spacingAndGlyphs">100%</text>
<!-- Dialog -->
<rect x="1049" y="682" width="1751" height="551" fill="#000" opacity=".07"/>
<rect x="1046" y="679" width="1750" height="550" fill="#fff" stroke="#4a9068" stroke-width="2"/>
<path d="M2741 697L2767 723.5M2767 697L2741 723.5" stroke="#777" stroke-width="2"  fill="none"/>
<text x="1122" y="798" font-size="48" textLength="166" lengthAdjust="spacingAndGlyphs" style="fill:#4a9068">Da Web</text>
<circle cx="1134.5" cy="854.5" r="10.5" fill="#fff" stroke="#a6a6a6" stroke-width="2"/>
<circle cx="1134.5" cy="854.5" r="5.5" fill="#666"/>
<text x="1156" y="863.7" font-size="28.5" textLength="98" lengthAdjust="spacingAndGlyphs">Di base</text>
<circle cx="1315.5" cy="854.5" r="10.5" fill="#fff" stroke="#a6a6a6" stroke-width="2"/>
<text x="1337.7" y="863.7" font-size="28.5" textLength="120.3" lengthAdjust="spacingAndGlyphs">Avanzate</text>
<text x="1120.7" y="926.3" font-size="28.5" textLength="52.8" lengthAdjust="spacingAndGlyphs">URL</text>
<rect x="1121" y="941.5" width="1001.5" height="51.5" fill="#fff" stroke="#a3d5b8" stroke-width="3"/>
<text x="1134.5" y="980" font-size="28.5" textLength="568.5" lengthAdjust="spacingAndGlyphs">http://www.legaseriea.it/it/serie-a/classifica</text>
<rect x="2387.5" y="1099.5" width="147" height="51.5" fill="#fff" stroke="#217346" stroke-width="3.4"/>
<text x="2443" y="1136" font-size="25.5" textLength="36" lengthAdjust="spacingAndGlyphs" style="fill:#217346">OK</text>
<rect x="2571" y="1099.5" width="147" height="51.5" fill="#fff" stroke="#c6c6c6" stroke-width="3"/>
<text x="2600.6" y="1136" font-size="25.5" textLength="87.4" lengthAdjust="spacingAndGlyphs">Annulla</text>
</svg>
</body></html>
